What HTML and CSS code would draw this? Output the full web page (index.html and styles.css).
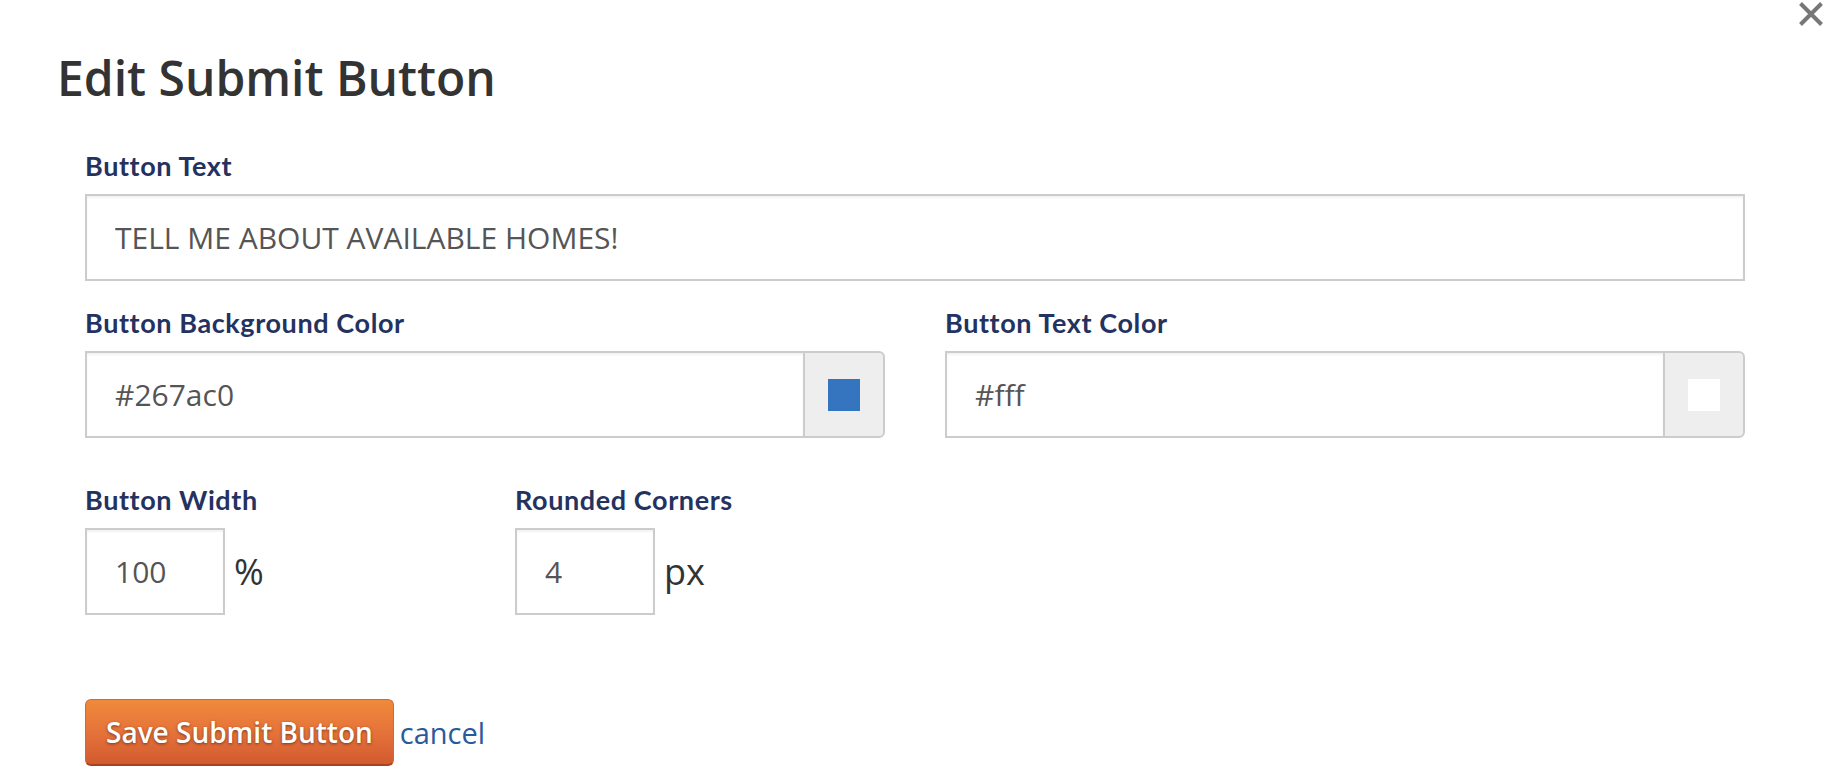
FILE: index.html
```html
<!DOCTYPE html>
<html lang="en">
<head>
<meta charset="utf-8">
<title>Edit Submit Button</title>
<link rel="stylesheet" href="styles.css">
</head>
<body>
<div class="modal">
  <button class="close" type="button" aria-label="Close">
    <svg viewBox="0 0 24 24" width="24" height="24" aria-hidden="true"><path d="M1.5 1.5 L22.5 22.5 M22.5 1.5 L1.5 22.5" stroke="#777" stroke-width="4" fill="none"/></svg>
  </button>
  <h1 class="title">Edit Submit Button</h1>
  <form class="form">
    <div class="group">
      <label class="label">Button Text</label>
      <input class="field" type="text" value="TELL ME ABOUT AVAILABLE HOMES!">
    </div>
    <div class="row-colors">
      <div class="col">
        <label class="label">Button Background Color</label>
        <div class="color-input">
          <input class="field field-joined" type="text" value="#267ac0">
          <span class="addon"><span class="swatch swatch-blue"></span></span>
        </div>
      </div>
      <div class="col">
        <label class="label">Button Text Color</label>
        <div class="color-input">
          <input class="field field-joined" type="text" value="#fff">
          <span class="addon"><span class="swatch swatch-white"></span></span>
        </div>
      </div>
    </div>
    <div class="row-sizes">
      <div class="col">
        <label class="label">Button Width</label>
        <div class="size-input">
          <input class="field field-small" type="text" value="100">
          <span class="unit">%</span>
        </div>
      </div>
      <div class="col">
        <label class="label">Rounded Corners</label>
        <div class="size-input">
          <input class="field field-small" type="text" value="4">
          <span class="unit">px</span>
        </div>
      </div>
    </div>
    <div class="actions">
      <button class="btn-save" type="button">Save Submit Button</button>
      <a class="cancel" href="#">cancel</a>
    </div>
  </form>
</div>
</body>
</html>
```
FILE: styles.css
```css
html, body {
  margin: 0;
  padding: 0;
  background: #fff;
}

body {
  font-family: "Open Sans", "Liberation Sans", sans-serif;
  color: #333;
}

.modal {
  position: relative;
  padding-top: 49px;
  min-height: 735px;
}

.close {
  position: absolute;
  top: 2px;
  right: 15px;
  width: 24px;
  height: 24px;
  padding: 0;
  margin: 0;
  border: 0;
  background: transparent;
  cursor: pointer;
}

.close svg {
  display: block;
}

.title {
  margin: 0 0 43px 57px;
  font-family: "Open Sans", "Liberation Sans", sans-serif;
  font-weight: 600;
  font-size: 48px;
  line-height: 58px;
  color: #333;
}

.form {
  padding: 0 93px 0 85px;
}

.label {
  display: block;
  margin-bottom: 13px;
  font-family: Lato, "Liberation Sans", sans-serif;
  font-weight: 700;
  font-size: 27px;
  letter-spacing: 0.6px;
  line-height: 31px;
  color: #24325f;
}

.group {
  margin-bottom: 26px;
}

.field {
  display: block;
  box-sizing: border-box;
  width: 100%;
  height: 87px;
  margin: 0;
  padding: 0 28px;
  border: 2px solid #ccc;
  border-radius: 0;
  background: #fff;
  font-family: "Open Sans", "Liberation Sans", sans-serif;
  font-size: 30px;
  color: #555;
  outline: none;
  box-shadow: inset 0 2px 2px rgba(0, 0, 0, 0.05);
}

.row-colors {
  display: grid;
  grid-template-columns: 1fr 1fr;
  column-gap: 60px;
  margin-bottom: 46px;
}

.color-input {
  display: flex;
}

.field-joined {
  flex: 1;
  min-width: 0;
  border-right: 0;
}

.addon {
  box-sizing: border-box;
  display: flex;
  align-items: center;
  justify-content: center;
  width: 82px;
  height: 87px;
  border: 2px solid #ccc;
  border-radius: 0 6px 6px 0;
  background: #eee;
}

.swatch {
  display: block;
  width: 32px;
  height: 32px;
}

.swatch-blue {
  background: #3575bf;
}

.swatch-white {
  background: #fff;
}

.row-sizes {
  display: grid;
  grid-template-columns: repeat(4, 1fr);
  column-gap: 60px;
  margin-bottom: 84px;
}

.size-input {
  display: flex;
  align-items: center;
}

.field-small {
  width: 140px;
}

.unit {
  margin-left: 9px;
  font-family: "Open Sans", "Liberation Sans", sans-serif;
  font-size: 36px;
  color: #333;
}

.actions {
  display: flex;
  align-items: center;
}

.btn-save {
  box-sizing: border-box;
  height: 67px;
  margin: 0;
  padding: 0 20px;
  border: 1px solid #cf6a30;
  border-bottom: 2px solid #a8431e;
  border-radius: 6px;
  background: linear-gradient(to bottom, #f08a3a 0%, #e5733a 50%, #d25a30 100%);
  font-family: "Open Sans", "Liberation Sans", sans-serif;
  font-weight: 600;
  font-size: 28px;
  color: #fff;
  text-shadow: 0 1px 3px rgba(60, 20, 0, 0.6);
  cursor: pointer;
}

.cancel {
  margin-left: 6px;
  font-family: "Open Sans", "Liberation Sans", sans-serif;
  font-size: 29px;
  color: #285b9a;
  text-decoration: none;
}
```
